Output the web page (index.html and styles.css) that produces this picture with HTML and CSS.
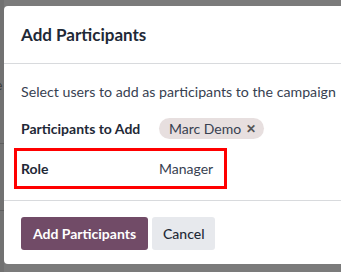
FILE: index.html
```html
<!DOCTYPE html>
<html>
<head>
<meta charset="utf-8">
<link rel="stylesheet" href="styles.css">
</head>
<body>
<div class="backdrop">
  <div class="bg-strip">
    <span class="bg-e">e</span>
    <div class="bg-line l1"></div>
    <div class="bg-line l2"></div>
  </div>
  <div class="dialog">
    <header class="dlg-header">
      <h4 class="dlg-title">Add Participants</h4>
    </header>
    <main class="dlg-body">
      <p class="intro">Select users to add as participants to the campaign</p>
      <div class="field-row">
        <label class="field-label">Participants to Add</label>
        <span class="tag">Marc Demo <span class="tag-x">✕</span></span>
      </div>
      <div class="field-row role-row">
        <label class="field-label">Role</label>
        <span class="field-value">Manager</span>
      </div>
    </main>
    <footer class="dlg-footer">
      <button class="btn btn-primary">Add Participants</button>
      <button class="btn btn-secondary">Cancel</button>
    </footer>
  </div>
</div>
</body>
</html>
```
FILE: styles.css
```css
* { box-sizing: border-box; }
html, body { margin: 0; padding: 0; }
body {
  font-family: Lato, "Noto Sans", sans-serif;
  background: #7a7a7a;
  width: 341px;
  height: 272px;
  overflow: hidden;
}
.backdrop {
  position: relative;
  height: 272px;
  background: #7b7b7b;
  padding: 6px 0 0 4px;
}
.bg-strip {
  position: absolute;
  left: 0; top: 0;
  width: 4px; height: 272px;
  background: #727272;
  overflow: hidden;
}
.bg-e {
  position: absolute;
  left: -5px; top: 76px;
  font-size: 14px;
  color: #3a3a3a;
}
.bg-line { position: absolute; left: 0; width: 4px; height: 1px; background: #5e5e5e; }
.l1 { top: 143px; }
.l2 { top: 210px; }
.dialog {
  position: relative;
  width: 360px;
  height: 258px;
  background: #fff;
  border-radius: 4px 0 0 4px;
  display: flex;
  flex-direction: column;
}
.dlg-header {
  height: 58px;
  border-bottom: 1px solid #d8dadd;
  display: flex;
  align-items: center;
  padding: 0 17px;
}
.dlg-title {
  margin: 0;
  font-size: 17px;
  font-weight: 700;
  color: #1f2937;
}
.dlg-body {
  height: 137px;
  border-bottom: 1px solid #d8dadd;
  padding: 18px 17px 0 10px;
}
.intro {
  margin: 0 0 0 7px;
  font-size: 14.2px;
  color: #374151;
  white-space: nowrap;
  line-height: 20px;
}
.field-row {
  display: flex;
  align-items: center;
  margin-top: 16px;
  padding-left: 7px;
}
.field-label {
  width: 138px;
  font-size: 14px;
  font-weight: 700;
  color: #1f2937;
  white-space: nowrap;
}
.tag {
  display: inline-flex;
  align-items: center;
  gap: 5px;
  height: 21px;
  padding: 0 8px 0 10px;
  border-radius: 11px;
  background: #e7dfdf;
  font-size: 14px;
  color: #374151;
  white-space: nowrap;
}
.tag-x { font-size: 12px; font-weight: 700; color: #555; }
.role-row {
  width: 213px;
  height: 41px;
  margin-top: 9px;
  border: 3px solid #ff0000;
  padding-left: 4px;
}
.field-value { font-size: 14px; color: #374151; }
.dlg-footer {
  display: flex;
  gap: 4px;
  padding: 16px 17px 0;
}
.btn {
  height: 33px;
  border: none;
  border-radius: 3px;
  font-family: inherit;
  font-size: 14px;
  padding: 0 11px;
  white-space: nowrap;
}
.btn-primary {
  width: 127px;
  background: #714b67;
  color: #fff;
  font-weight: 700;
}
.btn-secondary {
  width: 63px;
  background: #e7e9ed;
  color: #1f2937;
  font-weight: 500;
}
```
